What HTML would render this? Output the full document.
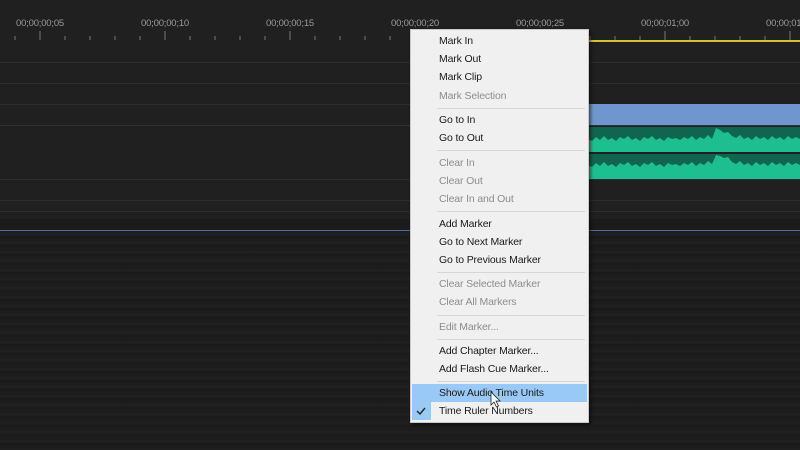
<!DOCTYPE html>
<html><head><style>
*{margin:0;padding:0;box-sizing:border-box}
body{width:800px;height:450px;overflow:hidden;background:#1f1f1f;position:relative;font-family:"Liberation Sans",sans-serif}
.abs{position:absolute}
.lbl{position:absolute;top:18px;font-size:9.5px;color:#9a9a9a;letter-spacing:-0.2px}
.hl{position:absolute;left:0;width:800px;height:1px;background:#2c2c2c}
.menu{position:absolute;left:410px;top:29px;width:179px;height:394px;background:#f0f0f0;border:1px solid #c8c8c8;box-shadow:2px 2px 3px rgba(0,0,0,.5)}
.it{position:absolute;left:28px;font-size:10.5px;letter-spacing:-0.15px;color:#1a1a1a;line-height:18px;white-space:nowrap}
.dis{color:#8d8d8d}
.sep{position:absolute;left:26px;right:3px;height:1px;background:#d6d6d6}
</style></head><body>
<div class="abs" style="left:0;top:0;width:800px;height:230px;background:#202020"></div>
<div class="abs" style="left:0;top:231px;width:800px;height:219px;background:repeating-linear-gradient(180deg,#1b1b1b 0px,#212121 3px,#1a1a1a 6px,#1e1e1e 9px)"></div>
<div class="lbl" style="left:16px">00;00;00;05</div>
<div class="lbl" style="left:141px">00;00;00;10</div>
<div class="lbl" style="left:266px">00;00;00;15</div>
<div class="lbl" style="left:391px">00;00;00;20</div>
<div class="lbl" style="left:516px">00;00;00;25</div>
<div class="lbl" style="left:641px">00;00;01;00</div>
<div class="lbl" style="left:766px">00;00;01</div>
<svg class="abs" style="left:0;top:0" width="800" height="45">
<g stroke="#777" stroke-width="1">
<path d="M15 36v4M40 31v9M65 36v4M90 36v4M115 36v4M140 36v4M165 31v9M190 36v4M215 36v4M240 36v4M265 36v4M290 31v9M315 36v4M340 36v4M365 36v4M390 36v4M415 31v9M440 36v4M465 36v4M490 36v4M515 36v4M540 31v9M565 36v4M590 36v4M615 36v4M640 36v4M665 31v9M690 36v4M715 36v4M740 36v4M765 36v4M790 31v9"/>
</g>
<rect x="410" y="40" width="390" height="2" fill="#d8c23a"/>
</svg>
<div class="hl" style="top:62px"></div>
<div class="hl" style="top:83px"></div>
<div class="hl" style="top:104px"></div>
<div class="hl" style="top:125px;background:#333"></div>
<div class="hl" style="top:179px"></div>
<div class="hl" style="top:200px"></div>
<div class="hl" style="top:211px"></div>
<div class="abs" style="left:0;top:219px;width:800px;height:11px;background:#1b1b1b"></div>
<div class="abs" style="left:0;top:230px;width:800px;height:1px;background:#4a6fa5"></div>
<div class="abs" style="left:588px;top:104px;width:212px;height:21px;background:#6f96cf"></div>
<svg class="abs" style="left:588px;top:127px" width="212" height="52">
<rect x="0" y="0" width="212" height="25" fill="#10654f"/>
<rect x="0" y="27" width="212" height="25" fill="#10654f"/>
<path d="M0 25V12 L4 14 8 10 12 13 16 9 20 13 24 11 28 14 32 10 36 12 40 9 44 13 48 11 52 14 56 10 60 12 64 9 68 13 72 11 76 14 80 10 84 12 88 11 92 13 96 10 100 12 104 9 108 13 112 10 116 12 120 8 124 12 128 1 132 3 136 6 140 5 144 9 148 11 152 8 156 12 160 10 164 13 168 9 172 12 176 10 180 13 184 9 188 12 192 10 196 13 200 9 204 12 208 10 212 12V25Z" fill="#1dbf91"/>
<path d="M0 52V38 L4 40 8 36 12 39 16 35 20 39 24 37 28 40 32 36 36 38 40 35 44 39 48 37 52 40 56 36 60 38 64 35 68 39 72 37 76 40 80 36 84 38 88 37 92 39 96 36 100 38 104 35 108 39 112 36 116 38 120 34 124 37 128 28 132 29 136 31 140 30 144 35 148 37 152 34 156 38 160 36 164 39 168 35 172 38 176 36 180 39 184 35 188 38 192 36 196 39 200 35 204 38 208 36 212 38V52Z" fill="#1dbf91"/>
</svg>
<div class="menu">
<div class="it" style="top:2px">Mark In</div>
<div class="it" style="top:20px">Mark Out</div>
<div class="it" style="top:38px">Mark Clip</div>
<div class="it dis" style="top:57px">Mark Selection</div>
<div class="sep" style="top:78px"></div>
<div class="it" style="top:81px">Go to In</div>
<div class="it" style="top:99px">Go to Out</div>
<div class="sep" style="top:120px"></div>
<div class="it dis" style="top:124px">Clear In</div>
<div class="it dis" style="top:142px">Clear Out</div>
<div class="it dis" style="top:160px">Clear In and Out</div>
<div class="sep" style="top:181px"></div>
<div class="it" style="top:185px">Add Marker</div>
<div class="it" style="top:203px">Go to Next Marker</div>
<div class="it" style="top:221px">Go to Previous Marker</div>
<div class="sep" style="top:242px"></div>
<div class="it dis" style="top:245px">Clear Selected Marker</div>
<div class="it dis" style="top:263px">Clear All Markers</div>
<div class="sep" style="top:285px"></div>
<div class="it dis" style="top:288px">Edit Marker...</div>
<div class="sep" style="top:309px"></div>
<div class="it" style="top:312px">Add Chapter Marker...</div>
<div class="it" style="top:330px">Add Flash Cue Marker...</div>
<div class="sep" style="top:351px"></div>
<div class="abs" style="left:1px;top:354px;width:175px;height:18px;background:#99c9f6"></div>
<div class="abs" style="left:1px;top:372px;width:19px;height:18px;background:#99c9f6"></div>
<div class="it" style="top:354px">Show Audio Time Units</div>
<div class="it" style="top:372px">Time Ruler Numbers</div>
<svg class="abs" style="left:5px;top:376px" width="10" height="10"><path d="M1 5l3 3 5-6" stroke="#222" stroke-width="1.4" fill="none"/></svg>
<svg class="abs" style="left:79px;top:361px" width="12" height="18"><path d="M1 1v13l3-3 2.5 5 2-1-2.5-5h4z" fill="#fff" stroke="#222" stroke-width="0.8"/></svg>
</div>
</body></html>
